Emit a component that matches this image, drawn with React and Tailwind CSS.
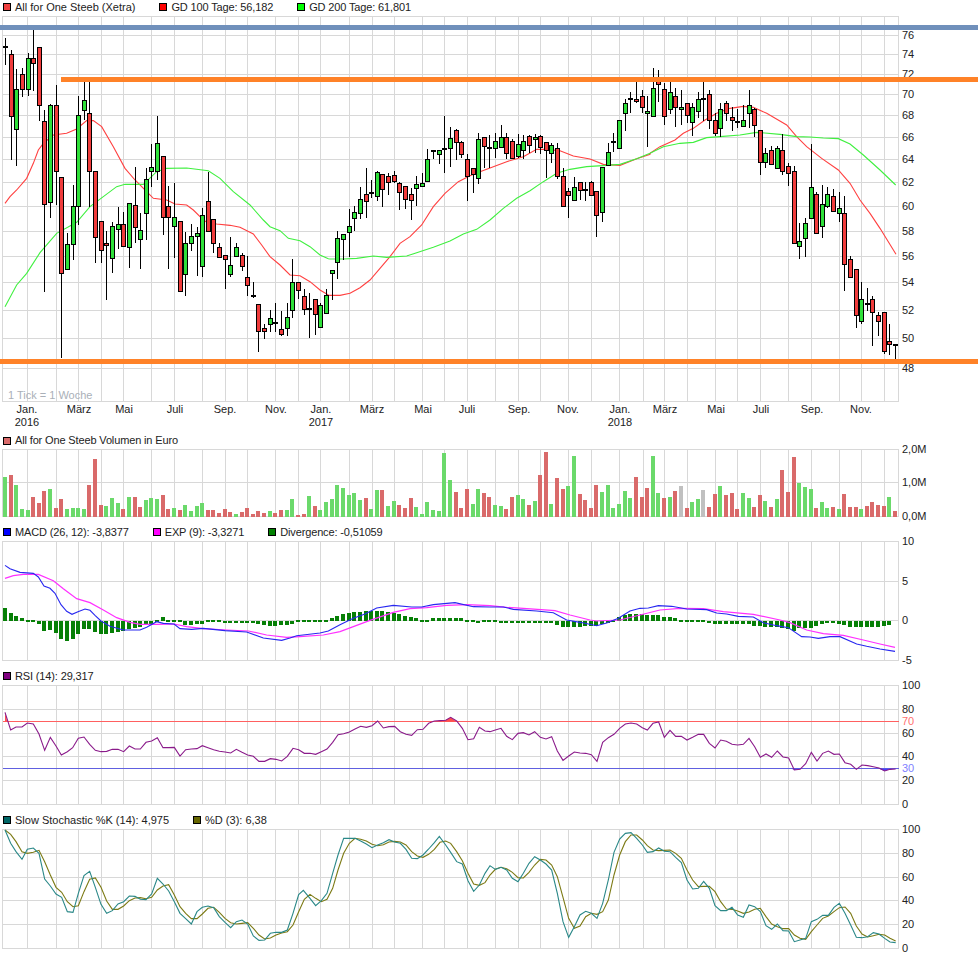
// Aktienchart: Kerzen + Volumen, MACD, RSI, Stochastik. Zahlen sind aus dem Chartbild abgelesen.
const STEP = 5.633
const barX = i => Math.round(5 + i * STEP)

// abgelesene Punkte liegen 3x vergroessert vor, ox/oy = Ausschnitt
const z = (ox, oy, pts) => pts.map(([x, y]) => [ox + x / 3, oy + y / 3])
const line = pts => pts.map(p => p.join(',')).join(' ')

const GRID_X = [2, 27, 56, 78, 101, 123, 151, 174, 202, 225, 247, 275, 298, 320, 349, 372, 394, 422, 444, 467, 495, 518, 540, 568, 591, 619, 643, 664, 687, 715, 737, 760, 788, 811, 839, 861, 884, 898]

// oben, unten, Docht oben, Docht unten, Typ (g/r/d)
const CANDLES = [
  [47, 47, 38, 65, 'd'], [54, 116, 50, 160, 'r'], [89, 129, 69, 166, 'g'], [74, 89, 68, 97, 'r'], [58, 89, 53, 96, 'g'],
  [58, 63, 30, 91, 'r'], [47, 105, 47, 121, 'r'], [121, 204, 110, 292, 'r'], [105, 202, 104, 218, 'g'], [105, 171, 85, 205, 'r'],
  [177, 273, 177, 358, 'r'], [244, 269, 233, 270, 'g'], [206, 244, 185, 260, 'g'], [115, 206, 96, 225, 'g'], [100, 110, 82, 120, 'g'],
  [113, 171, 82, 207, 'r'], [171, 237, 171, 263, 'r'], [221, 250, 221, 263, 'r'], [243, 245, 231, 300, 'r'], [226, 258, 222, 273, 'g'],
  [224, 229, 207, 249, 'g'], [224, 246, 212, 247, 'r'], [203, 247, 203, 268, 'g'], [205, 227, 167, 243, 'r'], [230, 239, 213, 269, 'g'],
  [179, 213, 168, 240, 'g'], [167, 171, 144, 187, 'g'], [143, 171, 116, 180, 'g'], [156, 217, 156, 235, 'r'], [206, 217, 186, 269, 'r'],
  [217, 226, 183, 258, 'g'], [221, 291, 221, 292, 'r'], [243, 274, 232, 296, 'g'], [236, 243, 224, 251, 'g'], [233, 236, 227, 276, 'g'],
  [215, 266, 208, 277, 'g'], [201, 231, 172, 231, 'r'], [219, 243, 219, 253, 'r'], [247, 257, 243, 257, 'r'], [255, 259, 255, 289, 'r'],
  [265, 274, 237, 277, 'g'], [247, 256, 243, 256, 'g'], [255, 266, 253, 271, 'r'], [277, 285, 256, 296, 'r'], [296, 296, 282, 298, 'd'],
  [304, 331, 304, 352, 'r'], [328, 331, 324, 339, 'r'], [318, 324, 310, 332, 'g'], [323, 323, 303, 332, 'd'], [329, 334, 311, 336, 'r'],
  [317, 328, 303, 336, 'g'], [282, 310, 259, 318, 'g'], [282, 290, 282, 299, 'r'], [296, 309, 289, 315, 'r'], [309, 309, 293, 338, 'd'],
  [299, 314, 299, 335, 'r'], [305, 327, 303, 327, 'g'], [295, 313, 289, 313, 'g'], [270, 273, 270, 300, 'g'], [238, 262, 231, 279, 'g'],
  [234, 239, 234, 260, 'g'], [226, 232, 209, 257, 'g'], [212, 218, 206, 231, 'g'], [199, 213, 187, 219, 'g'], [194, 201, 168, 218, 'r'],
  [193, 193, 180, 198, 'd'], [172, 196, 171, 201, 'g'], [174, 189, 174, 207, 'r'], [176, 182, 173, 195, 'r'], [175, 181, 171, 183, 'r'],
  [183, 192, 182, 210, 'r'], [186, 199, 186, 209, 'r'], [194, 200, 188, 220, 'r'], [184, 188, 176, 206, 'g'], [183, 186, 173, 187, 'g'],
  [159, 181, 149, 181, 'g'], [151, 151, 151, 159, 'd'], [150, 154, 150, 164, 'g'], [149, 149, 116, 173, 'd'], [138, 148, 127, 167, 'g'],
  [130, 142, 129, 160, 'r'], [142, 154, 141, 158, 'r'], [159, 176, 154, 201, 'r'], [168, 174, 168, 193, 'r'], [139, 178, 133, 184, 'g'],
  [137, 146, 137, 168, 'r'], [148, 148, 135, 168, 'd'], [141, 148, 133, 158, 'g'], [137, 147, 125, 147, 'g'], [137, 153, 133, 159, 'r'],
  [141, 158, 139, 159, 'r'], [144, 156, 134, 158, 'g'], [141, 150, 135, 159, 'g'], [136, 145, 135, 153, 'r'], [137, 139, 134, 153, 'g'],
  [136, 147, 135, 154, 'r'], [142, 150, 142, 178, 'r'], [145, 153, 143, 163, 'g'], [148, 176, 143, 179, 'r'], [176, 206, 168, 206, 'r'],
  [191, 195, 188, 218, 'r'], [187, 200, 177, 200, 'g'], [182, 190, 182, 200, 'r'], [190, 190, 182, 201, 'd'], [182, 195, 181, 195, 'r'],
  [191, 215, 191, 237, 'r'], [167, 212, 167, 222, 'g'], [152, 165, 143, 165, 'g'], [142, 142, 133, 152, 'd'], [120, 148, 120, 148, 'g'],
  [103, 113, 99, 131, 'g'], [99, 99, 92, 113, 'd'], [99, 101, 82, 103, 'r'], [96, 107, 90, 113, 'r'], [111, 113, 96, 147, 'g'],
  [88, 116, 68, 116, 'g'], [80, 84, 70, 102, 'r'], [89, 116, 83, 125, 'r'], [92, 109, 82, 114, 'g'], [96, 107, 88, 127, 'r'],
  [107, 109, 90, 125, 'g'], [103, 115, 103, 123, 'r'], [107, 122, 103, 136, 'g'], [99, 111, 92, 118, 'g'], [99, 99, 82, 121, 'd'],
  [94, 120, 90, 129, 'r'], [120, 133, 113, 136, 'r'], [109, 128, 103, 137, 'g'], [103, 113, 101, 121, 'r'], [117, 120, 107, 131, 'r'],
  [122, 122, 109, 128, 'd'], [120, 126, 105, 126, 'g'], [105, 113, 90, 128, 'g'], [109, 125, 108, 137, 'r'], [130, 162, 130, 175, 'r'],
  [153, 162, 148, 168, 'g'], [150, 164, 146, 164, 'r'], [148, 168, 146, 168, 'g'], [150, 171, 134, 175, 'r'], [166, 173, 163, 186, 'r'],
  [171, 243, 166, 243, 'r'], [241, 246, 223, 259, 'g'], [223, 238, 218, 257, 'g'], [187, 218, 144, 218, 'g'], [194, 233, 192, 233, 'r'],
  [204, 226, 185, 238, 'g'], [194, 206, 187, 208, 'g'], [196, 211, 189, 211, 'r'], [208, 213, 192, 222, 'g'], [213, 264, 196, 291, 'r'],
  [259, 277, 256, 277, 'r'], [269, 315, 269, 328, 'r'], [299, 321, 282, 324, 'g'], [304, 304, 288, 311, 'd'], [299, 312, 296, 346, 'r'],
  [315, 321, 312, 336, 'r'], [312, 351, 312, 354, 'r'], [341, 344, 324, 355, 'r'], [345, 345, 345, 359, 'd'],
]

const SMA100 = [
  ...z(0, 0, [[15, 610], [30, 590], [50, 570], [80, 535], [100, 490], [115, 450], [130, 430], [160, 405], [200, 400], [230, 387], [260, 362], [280, 362], [305, 380], [340, 440], [375, 505], [405, 540], [440, 575], [460, 595], [500, 600], [525, 612], [560, 615], [580, 630]]),
  ...z(0, 210, [[600, 20], [620, 37], [650, 42], [690, 46], [720, 52], [760, 72], [785, 105], [810, 140], [840, 165], [870, 195], [900, 197], [930, 215], [960, 240], [985, 255]]),
  ...z(330, 60, [[0, 706], [30, 706], [60, 700], [90, 683], [120, 660], [150, 625], [180, 590], [210, 550], [240, 530], [275, 495], [310, 440], [345, 400], [385, 365], [420, 347], [450, 335], [490, 320], [530, 305], [580, 290], [620, 268], [650, 268], [690, 272], [730, 288], [780, 297], [820, 313], [870, 316], [920, 296], [960, 283]]),
  ...z(650, 0, [[0, 460], [30, 440], [75, 420], [100, 400], [130, 385], [165, 360], [200, 340], [240, 325], [280, 319], [310, 322], [350, 340], [410, 375], [440, 410], [470, 440], [515, 475], [565, 510], [600, 550], [630, 600]]),
  ...z(650, 200, [[660, 40], [690, 85], [738, 163]]),
]

const SMA200 = [
  ...z(0, 210, [[15, 290], [50, 225], [80, 190], [120, 128], [170, 70], [230, 37]]),
  ...z(0, 0, [[270, 620], [310, 590], [350, 560], [375, 553], [430, 553], [470, 515], [500, 505], [560, 504], [625, 512], [660, 535], [700, 575], [750, 615], [790, 660]]),
  ...z(0, 210, [[810, 50], [840, 62], [865, 85], [900, 92], [930, 110], [960, 135], [985, 146]]),
  ...z(330, 60, [[0, 597], [40, 597], [80, 595], [130, 588], [170, 592], [230, 588], [260, 578], [310, 562], [360, 543], [400, 522], [440, 508], [480, 480], [520, 445], [560, 415], [600, 392], [640, 365], [680, 340], [720, 328], [770, 320], [830, 316], [870, 313], [920, 296], [960, 280]]),
  ...z(650, 0, [[0, 460], [40, 440], [90, 430], [130, 427], [170, 413], [210, 410], [270, 405], [320, 397], [390, 403], [440, 410], [480, 411], [520, 414], [565, 416], [600, 432], [640, 465], [690, 510], [737, 555]]),
]

// Volumen: Oberkante, positiv = gruen, negativ = rot, 0.5 dazu = grau
const VOLUME = [141, -135, 165, 237, 240, -201, -219, -183, 177, -234, -207, 237, 234, 234, 237, -165, -87, -225, 228, 204, 219, -237, 201, -201, -231, 210, 204, 207, -195, -237, 234, -240, 225, 243, 228, 219, -240, -240, -249, -237, -246, 252, -246, -234, -252, -243, -249, 243, -249, -240, 240, 207, -255, -252, 198, -228, 240, 216, 207, 165, 174, 195, 189, 210, -204, 237, 180, -180, 228, 213, -225, -234, -204, 231, 252, 216, 240, 243, 69, 150, -186, -234, -177, 222, 177, -189, -201, 225, 228, -237, -201, 195, 207, -225, 213, -135, -66, 222, -144, -177, 168, 78, -192, -210, -234, -165, 186, 165, 234, 222, 183, 204, -141, -201, -174, 78, 189, -204, 201, -183, 168.5, -234, 216, 207, 180.5, -231, -192, 168, -195, -189, -237, 189, 204, -231, -195, 213, -231, 207, -120, -186, -81, 159, 171, 177, -234, 216, 234, -231, 237, -192, -231, -231, 237, -228, -216, -225, -228, 201, -243]

const DIVERGENCE = [534, 549, 558, 565, 569, 571, 582, 603, 600, 609, 627, 632, 627, 612, 597, 597, 606, 612, 612, 609, 606, 603, 597, 594, 591, 585, 582, 574, 561, 567, 574, 575, 585, 585, 582, 582, 575, 577, 577, 579, 579, 579, 579, 579, 579, 582, 585, 588, 588, 585, 585, 582, 576, 570, 570, 570, 570, 568, 564, 558, 552, 549, 546, 546, 543, 543, 543, 543, 546, 549, 552, 558, 561, 564, 567, 567, 564, 564, 564, 564, 564, 564, 567, 575, 578, 575, 575, 577, 578, 578, 578, 578, 578, 578, 578, 578, 578, 578, 585, 590, 590, 590, 590, 587, 587, 587, 582, 578, 566, 561, 555, 552, 552, 552, 555, 555, 555, 561, 561, 564, 567, 575, 575, 575, 575, 579, 582, 582, 582, 582, 582, 582, 582, 587, 587, 590, 590, 590, 595, 597, 602, 595, 595, 595, 588, 582, 579, 579, 582, 585, 590, 590, 590, 590, 590, 590, 587, 585]

const MACD = [
  ...z(0, 430, [[15, 406], [30, 416], [60, 427], [100, 430], [115, 441], [132, 468], [150, 475], [165, 490], [183, 524], [200, 544], [216, 553], [234, 545], [255, 537], [270, 541], [285, 556], [303, 573], [330, 589], [370, 600], [420, 600], [440, 592], [470, 575], [490, 580], [522, 582], [540, 596], [575, 598], [610, 595], [675, 602], [740, 606], [790, 624], [845, 631], [870, 624], [890, 617], [960, 609], [985, 603], [1020, 584], [1060, 565], [1095, 552], [1130, 534], [1180, 526], [1235, 531], [1265, 531], [1300, 524], [1365, 518], [1420, 530]]),
  ...z(490, 430, [[0, 531], [40, 531], [70, 538], [140, 543], [190, 548], [230, 570], [270, 577], [320, 587], [350, 579], [385, 565], [420, 543], [450, 535], [475, 534], [505, 527], [545, 529], [590, 537], [650, 539], [680, 549], [710, 552], [745, 559], [790, 561], [820, 578], [860, 587], [895, 593], [935, 620], [960, 621], [985, 625], [1020, 620], [1050, 620], [1100, 642], [1130, 649], [1170, 657], [1215, 664]]),
]
const EXP = [
  ...z(0, 430, [[15, 445], [40, 437], [70, 433], [115, 433], [160, 452], [190, 476], [230, 506], [270, 518], [310, 540], [350, 563], [390, 577], [420, 583], [470, 583], [522, 582], [560, 590], [610, 596], [680, 600], [745, 603], [800, 615], [860, 622], [900, 620], [970, 615], [1020, 605], [1060, 590], [1110, 571], [1180, 547], [1230, 536], [1280, 533], [1340, 526], [1400, 524]]),
  ...z(490, 430, [[0, 527], [50, 532], [100, 535], [195, 542], [240, 555], [300, 570], [320, 573], [390, 570], [450, 555], [510, 540], [570, 535], [640, 536], [700, 545], [790, 553], [870, 570], [900, 578], [950, 600], [1000, 611], [1060, 616], [1120, 630], [1170, 642], [1215, 652]]),
]

const RSI = [
  ...z(0, 665, [[15, 142], [32, 195], [48, 186], [66, 186], [82, 174], [100, 177], [117, 207], [134, 256], [151, 217], [168, 243], [184, 270], [202, 260], [218, 248], [235, 220], [252, 216], [269, 238], [286, 256], [303, 260], [320, 259], [337, 253], [354, 253], [371, 260], [388, 243], [405, 252], [421, 252], [438, 232], [455, 228], [472, 218], [489, 248], [506, 248], [523, 247], [540, 273], [557, 254], [574, 252], [591, 251], [607, 242], [624, 248], [641, 254], [658, 259], [675, 261], [692, 264], [709, 253], [726, 262], [743, 270], [760, 274], [777, 289], [794, 289], [811, 281], [828, 283], [845, 288], [862, 274], [879, 250], [896, 254], [913, 265], [930, 265], [947, 268], [964, 260], [981, 252], [998, 232], [1014, 209], [1031, 206], [1048, 201], [1065, 192], [1082, 184], [1099, 187], [1116, 182], [1133, 168], [1150, 189], [1167, 185], [1184, 184], [1201, 200], [1218, 208], [1235, 211], [1252, 194], [1269, 193], [1286, 175], [1303, 168], [1320, 167], [1337, 166], [1352, 157], [1370, 168], [1387, 190], [1404, 224], [1421, 221], [1438, 187], [1455, 198]]),
  ...z(490, 665, [[0, 200], [16, 195], [33, 190], [50, 214], [67, 224], [84, 205], [100, 203], [117, 210], [134, 200], [151, 217], [168, 222], [185, 215], [202, 258], [219, 286], [236, 273], [253, 261], [270, 264], [287, 265], [304, 269], [321, 289], [338, 232], [355, 218], [372, 208], [389, 190], [406, 177], [423, 174], [440, 177], [457, 188], [472, 195], [489, 175], [506, 171], [523, 217], [540, 196], [557, 214], [574, 214], [591, 225], [608, 217], [625, 208], [641, 208], [658, 235], [675, 249], [692, 225], [709, 229], [726, 238], [743, 240], [760, 238], [777, 220], [794, 245], [811, 277], [828, 267], [845, 277], [862, 258], [879, 276], [896, 279], [913, 315], [930, 313], [947, 296], [964, 262], [981, 288], [998, 265], [1015, 258], [1032, 268], [1048, 267], [1065, 293], [1082, 298], [1099, 313], [1116, 300], [1133, 302], [1150, 305], [1167, 309], [1184, 318], [1200, 313], [1217, 312]]),
]

const STOCH_K = [
  ...z(0, 810, [[15, 60], [32, 100], [48, 125], [66, 148], [82, 118], [100, 114], [117, 130], [134, 207], [151, 228], [168, 252], [185, 262], [202, 305], [219, 307], [235, 250], [252, 197], [269, 184], [286, 232], [303, 283], [320, 310], [337, 302], [354, 282], [371, 275], [388, 258], [405, 259], [421, 268], [438, 269], [455, 252], [472, 205], [489, 222], [506, 243], [523, 275], [540, 310], [557, 326], [574, 342], [591, 305], [607, 292], [624, 288], [641, 293], [658, 320], [675, 337], [692, 353], [709, 335], [726, 330], [743, 342], [760, 378], [777, 391], [794, 390], [811, 370], [828, 367], [845, 367], [862, 360], [879, 310], [896, 254], [910, 241], [930, 265], [947, 287], [964, 272], [981, 250], [998, 190], [1014, 135], [1031, 85], [1048, 85], [1065, 85], [1082, 93], [1099, 102], [1116, 113], [1133, 105], [1150, 98], [1167, 89], [1184, 96], [1201, 100], [1218, 118], [1235, 145], [1252, 146], [1269, 135], [1286, 117], [1303, 98], [1318, 79], [1337, 105], [1352, 127], [1370, 155], [1387, 162], [1404, 212], [1421, 244], [1438, 225], [1455, 190]]),
  ...z(490, 810, [[0, 167], [16, 178], [33, 172], [50, 180], [67, 205], [84, 215], [100, 190], [117, 160], [134, 140], [151, 150], [168, 162], [185, 180], [202, 250], [219, 335], [236, 382], [253, 350], [270, 315], [287, 304], [304, 310], [321, 325], [338, 280], [355, 210], [372, 127], [389, 87], [406, 70], [423, 68], [440, 85], [457, 105], [472, 127], [489, 125], [506, 114], [523, 124], [540, 125], [557, 142], [574, 158], [591, 210], [608, 237], [625, 235], [641, 214], [658, 235], [675, 287], [692, 302], [709, 302], [726, 292], [743, 315], [760, 322], [777, 285], [794, 290], [811, 305], [828, 347], [845, 358], [862, 342], [879, 362], [896, 363], [913, 395], [930, 390], [947, 385], [964, 335], [981, 328], [998, 316], [1015, 316], [1032, 292], [1048, 280], [1065, 310], [1082, 345], [1099, 382], [1116, 383], [1133, 380], [1150, 368], [1167, 372], [1184, 385], [1200, 396], [1217, 398]]),
]
const STOCH_D = [
  ...z(0, 810, [[15, 60], [32, 73], [48, 95], [66, 125], [82, 130], [100, 127], [117, 121], [134, 155], [151, 195], [168, 232], [185, 247], [202, 275], [219, 290], [235, 287], [252, 245], [269, 208], [286, 204], [303, 232], [320, 273], [337, 298], [354, 298], [371, 288], [388, 272], [405, 264], [421, 263], [438, 266], [455, 262], [472, 240], [489, 228], [506, 224], [523, 255], [540, 290], [557, 310], [574, 326], [591, 326], [607, 312], [624, 295], [641, 292], [658, 307], [675, 325], [692, 338], [709, 342], [726, 340], [743, 338], [760, 355], [777, 375], [794, 387], [811, 384], [828, 375], [845, 369], [862, 365], [879, 345], [896, 305], [913, 268], [930, 253], [947, 265], [964, 275], [981, 268], [998, 235], [1014, 180], [1031, 130], [1048, 100], [1065, 85], [1082, 88], [1099, 93], [1116, 103], [1133, 107], [1150, 104], [1167, 96], [1184, 94], [1201, 96], [1218, 105], [1235, 125], [1252, 138], [1269, 142], [1286, 133], [1303, 118], [1320, 97], [1337, 93], [1352, 100], [1370, 125], [1387, 152], [1404, 190], [1421, 222], [1438, 226], [1455, 218]]),
  ...z(490, 810, [[0, 195], [16, 178], [33, 172], [50, 176], [67, 187], [84, 203], [100, 204], [117, 187], [134, 165], [151, 148], [168, 150], [185, 165], [202, 200], [219, 262], [236, 325], [253, 355], [270, 348], [287, 320], [304, 310], [321, 313], [338, 305], [355, 270], [372, 195], [389, 135], [406, 95], [423, 75], [440, 75], [457, 90], [472, 107], [489, 120], [506, 122], [523, 121], [540, 120], [557, 130], [574, 145], [591, 180], [608, 210], [625, 230], [641, 229], [658, 229], [675, 245], [692, 275], [709, 297], [726, 298], [743, 303], [760, 310], [777, 306], [794, 298], [811, 295], [828, 320], [845, 342], [862, 350], [879, 356], [896, 356], [913, 375], [930, 385], [947, 388], [964, 365], [981, 345], [998, 325], [1015, 318], [1032, 305], [1048, 293], [1065, 291], [1082, 310], [1099, 348], [1116, 372], [1133, 381], [1150, 377], [1167, 373], [1184, 375], [1200, 385], [1217, 393]]),
]

const MONTHS = [
  [27, 'Jan.', '2016'], [79, 'März'], [124, 'Mai'], [175, 'Juli'], [225, 'Sep.'], [276, 'Nov.'],
  [321, 'Jan.', '2017'], [372, 'März'], [423, 'Mai'], [467, 'Juli'], [519, 'Sep.'], [568, 'Nov.'],
  [620, 'Jan.', '2018'], [665, 'März'], [716, 'Mai'], [761, 'Juli'], [812, 'Sep.'], [861, 'Nov.'],
]

function Legend({ items, className }) {
  return (
    <div className={`flex gap-6 pl-[3px] items-center text-[11px] leading-none text-[#222] ${className}`}>
      {items.map(([color, label, tight]) => (
        <div key={label} className={`flex items-center gap-1 whitespace-nowrap ${tight ? 'tracking-[-0.14px]' : ''}`}>
          <span className={`w-2 h-2 border border-black ${color}`} />
          {label}
        </div>
      ))}
    </div>
  )
}

// viewBox in Seitenkoordinaten, damit die abgelesenen Werte direkt passen
function Plot({ top, height, bottom, hs, labels, children }) {
  return (
    <svg width="978" height={height} viewBox={`0 ${top} 978 ${height}`} className="text-[11px] overflow-visible">
      <g stroke="#d8d8d8" shapeRendering="crispEdges">
        {GRID_X.map(x => <line key={x} x1={x + 0.5} x2={x + 0.5} y1={top} y2={bottom} />)}
        {hs.map(y => <line key={y} x1="2" x2="899" y1={y + 0.5} y2={y + 0.5} />)}
      </g>
      {labels.map(([t, y, color]) => (
        <text key={t} x="902" y={y + 4} fill={color || '#222'}>{t}</text>
      ))}
      {children}
    </svg>
  )
}

function Candle({ c, i }) {
  const [top, bot, hi, lo, type] = c
  const x = barX(i)
  return (
    <g>
      <line x1={x + 0.5} x2={x + 0.5} y1={hi} y2={lo} stroke="#000" />
      {type === 'd'
        ? <rect x={x - 2} y={top - 1} width="5" height="2" fill="#000" />
        : <rect x={x - 1.5} y={top + 0.5} width="4" height={Math.max(bot - top, 2)} fill={type === 'g' ? '#2fe03a' : '#f03c3c'} stroke="#000" />}
    </g>
  )
}

export default function App() {
  return (
    <div className="w-[978px] h-[958px] bg-white overflow-hidden font-['Liberation_Sans',Arial,sans-serif]">
      <Legend className="h-4 pb-[2px]" items={[['bg-[#f04040]', 'All for One Steeb (Xetra)'], ['bg-[#ff0000]', 'GD 100 Tage: 56,182', true], ['bg-[#00ff00]', 'GD 200 Tage: 61,801', true]]} />
      <Plot top={16} height={416} bottom={402}
        hs={[16, 35, 54, 74, 94, 115, 137, 159, 182, 206, 231, 256, 282, 310, 338, 368, 401]}
        labels={[['76', 35], ['74', 54], ['72', 74], ['70', 94], ['68', 115], ['66', 137], ['64', 159], ['62', 182], ['60', 206], ['58', 231], ['56', 256], ['54', 282], ['52', 310], ['50', 338], ['48', 368]]}>
        <polyline points={line(SMA100)} fill="none" stroke="#ff4040" strokeWidth="1.1" />
        <polyline points={line(SMA200)} fill="none" stroke="#40f040" strokeWidth="1.1" />
        <g shapeRendering="crispEdges">
          {CANDLES.map((c, i) => <Candle key={i} c={c} i={i} />)}
        </g>
        <text x="8" y="399" fill="#aab0b8">1 Tick = 1 Woche</text>
        {MONTHS.map(([x, m, year]) => (
          <g key={x} fill="#222" textAnchor="middle">
            <text x={x} y="413">{m}</text>
            {year && <text x={x} y="426">{year}</text>}
          </g>
        ))}
        <g shapeRendering="crispEdges">
          <rect x="0" y="25" width="978" height="5" fill="#7090bb" />
          <rect x="61" y="77" width="917" height="5" fill="#ff8228" />
          <rect x="0" y="359" width="978" height="5" fill="#ff8228" />
        </g>
      </Plot>

      <Legend className="h-[17px]" items={[['bg-[#d96a6a]', 'All for One Steeb Volumen in Euro', true]]} />
      <Plot top={449} height={76} bottom={517} hs={[449, 482, 516]}
        labels={[['2,0M', 449], ['1,0M', 482], ['0,0M', 516]]}>
        <g shapeRendering="crispEdges">
          {VOLUME.map((v, i) => {
            const top = 430 + Math.abs(v) / 3
            const color = v % 1 !== 0 ? '#c0c0c0' : v > 0 ? '#6bd96b' : '#d96a6a'
            return <rect key={i} x={barX(i) - 2} y={top} width="4" height={517 - top} fill={color} />
          })}
        </g>
      </Plot>

      <Legend className="h-4 pb-[2px]" items={[['bg-[#0000ff]', 'MACD (26, 12): -3,8377', true], ['bg-[#ff00ff]', 'EXP (9): -3,3271', true], ['bg-[#008000]', 'Divergence: -0,51059', true]]} />
      <Plot top={541} height={128} bottom={661} hs={[541, 581, 620, 660]}
        labels={[['10', 541], ['5', 581], ['0', 620], ['-5', 660]]}>
        <g shapeRendering="crispEdges" fill="#067f06">
          {DIVERGENCE.map((v, i) => {
            const y = 430 + v / 3
            const zero = 620.6
            const h = Math.abs(y - zero)
            return <rect key={i} x={barX(i) - 2} y={h < 2 ? 620 : Math.min(y, zero)} width="4" height={Math.max(h, 2)} />
          })}
        </g>
        <polyline points={line(EXP)} fill="none" stroke="#ff30ff" strokeWidth="1.2" />
        <polyline points={line(MACD)} fill="none" stroke="#2828f0" strokeWidth="1.1" />
      </Plot>

      <Legend className="h-4 pb-[2px]" items={[['bg-[#800080]', 'RSI (14): 29,317', true]]} />
      <Plot top={685} height={128} bottom={805} hs={[685, 709, 733, 756, 780, 804]}
        labels={[['100', 685], ['80', 709], ['70', 721, '#ff7070'], ['60', 733], ['40', 756], ['30', 768, '#8080ff'], ['20', 780], ['0', 804]]}>
        <g shapeRendering="crispEdges">
          <rect x="3" y="721" width="896" height="1" fill="#ff6060" />
          <rect x="3" y="768" width="896" height="1" fill="#6060e0" />
        </g>
        <polygon points={line(z(0, 665, [[15, 142], [22, 170], [15, 170]]))} fill="#ff5050" />
        <polygon points={line(z(0, 665, [[1303, 170], [1337, 166], [1352, 157], [1370, 170]]))} fill="#ff5050" />
        <polygon points={line(z(490, 665, [[905, 311], [913, 315], [930, 313], [938, 311]]))} fill="#4040ff" />
        <polygon points={line(z(490, 665, [[1167, 311], [1184, 318], [1200, 313], [1217, 312]]))} fill="#4040ff" />
        <polyline points={line(RSI)} fill="none" stroke="#8a1a8a" strokeWidth="1.1" />
      </Plot>

      <Legend className="h-4 pb-[2px]" items={[['bg-[#006666]', 'Slow Stochastic %K (14): 4,975'], ['bg-[#666600]', '%D (3): 6,38']]} />
      <Plot top={829} height={129} bottom={949} hs={[829, 853, 877, 900, 924, 948]}
        labels={[['100', 829], ['80', 853], ['60', 877], ['40', 900], ['20', 924], ['0', 948]]}>
        <polyline points={line(STOCH_D)} fill="none" stroke="#7c7a14" strokeWidth="1.1" />
        <polyline points={line(STOCH_K)} fill="none" stroke="#2a8888" strokeWidth="1.1" />
      </Plot>
    </div>
  )
}
